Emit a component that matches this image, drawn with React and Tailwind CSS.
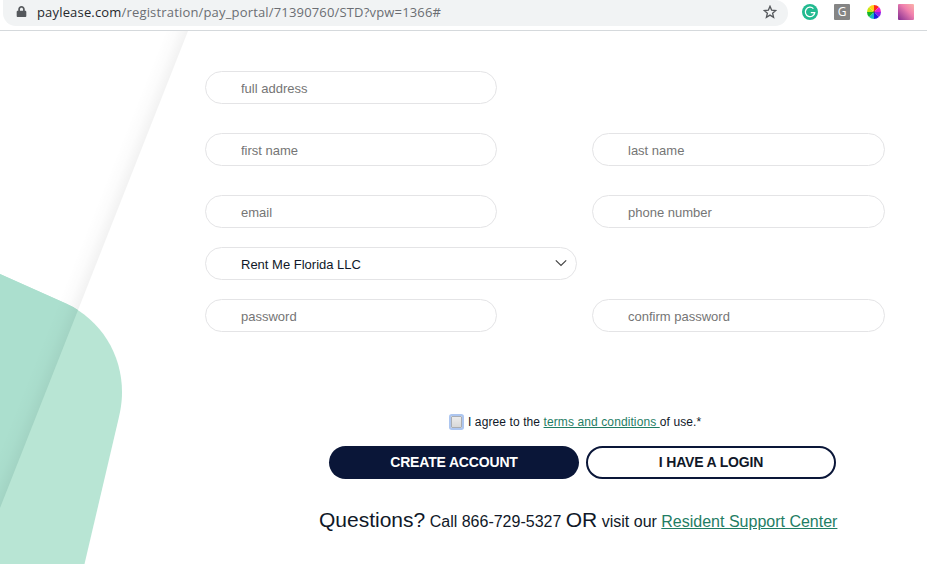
import { FaLock } from 'react-icons/fa';

const wheelColors = ['#ff2a1a', '#e81fd0', '#8a1fe8', '#1b1fe0', '#17b8c4', '#12b52a', '#c9e60f', '#ffd21a'];

function Field({ placeholder, type = 'text', className = '' }) {
  return (
    <input
      type={type}
      placeholder={placeholder}
      className={`block h-[33px] rounded-full border border-[#e4e4e6] bg-white pt-[2px] pr-4 pl-[35px] text-[13px] text-[#0a1638] outline-none placeholder:text-[#757575] ${className}`}
    />
  );
}

function ColorWheel() {
  return (
    <svg viewBox="-7 -7 14 14" className="size-[14px]">
      {wheelColors.map((color, index) => (
        <path key={color} d="M0 0V-7A7 7 0 0 1 4.95 -4.95Z" fill={color} transform={`rotate(${index * 45})`} />
      ))}
      <circle r="0.8" fill="#222" />
    </svg>
  );
}

function AddressBar() {
  return (
    <header className="flex h-[31px] shrink-0 items-start border-b border-[#d5d9dc] bg-white font-['Open_Sans','Noto_Sans',sans-serif]">
      <div className="ml-[3px] flex h-[26px] w-[785px] items-center rounded-r-full rounded-bl-full bg-[#f1f3f4] pr-[11px] pl-[13px]">
        <FaLock className="mb-[3px] size-[11px] text-[#55585c]" />
        <p className="mb-[2px] ml-[10px] text-[13px] leading-6 tracking-[0.17px] whitespace-nowrap text-[#6b6e73]">
          <span className="text-[#25282c]">paylease.com</span>/registration/pay_portal/71390760/STD?vpw=1366#
        </p>
        <svg viewBox="0 0 14 14" className="mb-[2px] ml-auto size-[14px]" fill="none" stroke="#55585c" strokeWidth="1.3">
          <path d="M7 1.3 8.6 5.1 12.8 5.5 9.6 8.2 10.6 12.3 7 10.1 3.4 12.3 4.4 8.2 1.2 5.5 5.4 5.1Z" />
        </svg>
      </div>
      <div className="ml-[14px] flex h-[24px] items-center gap-4">
        <svg viewBox="0 0 16 16" className="size-4" fill="none">
          <circle cx="8" cy="8" r="8" fill="#22ba90" />
          <path d="M11.4 4.6A4.7 4.7 0 1 0 12.7 8.600H8.8M12.7 8.600A4.7 4.7 0 0 1 11.6 11.100" stroke="white" strokeWidth="1.3" />
        </svg>
        <span className="flex size-4 items-center justify-center rounded-[1px] bg-[#858585] pb-px text-[12px] leading-none font-medium text-white">G</span>
        <span className="flex size-4 items-center justify-center">
          <ColorWheel />
        </span>
        <span className="size-4 rounded-[1px] bg-linear-to-tr from-[#852a91] via-[#f07fae] via-60% to-[#fbb3a8]" />
      </div>
    </header>
  );
}

function Backdrop() {
  return (
    <svg viewBox="0 31 927 533" className="absolute inset-0 size-full" aria-hidden="true">
      <defs>
        <linearGradient id="fold" gradientUnits="userSpaceOnUse" x1="168" y1="23.1" x2="188" y2="31">
          <stop offset="0" stopColor="#000" stopOpacity="0" />
          <stop offset="0.5" stopColor="#000" stopOpacity="0.014" />
          <stop offset="1" stopColor="#000" stopOpacity="0.05" />
        </linearGradient>
      </defs>
      <path d="M0 274 66 303.500C101 320 122 354 122 392C122 401 121 408 118.500 419L84.500 564H0Z" fill="#b8e5d4" />
      <path d="M0 274 66 303.500Q73 306.500 78 310L0 508Z" fill="#abdfce" />
      <path d="M0 31H188L0 508Z" fill="url(#fold)" />
    </svg>
  );
}

export default function App() {
  return (
    <div className="flex h-[564px] w-[927px] flex-col overflow-hidden bg-white font-['Liberation_Sans',Arial,sans-serif] text-[#101828]">
      <AddressBar />
      <main className="relative flex-1">
        <Backdrop />
        <form className="relative pt-10" onSubmit={(event) => event.preventDefault()}>
          <div className="ml-[205px] w-[680px]">
            <Field placeholder="full address" className="w-[292px]" />
            <div className="mt-[29px] flex justify-between">
              <Field placeholder="first name" className="w-[292px]" />
              <Field placeholder="last name" className="w-[293px]" />
            </div>
            <div className="mt-[29px] flex justify-between">
              <Field placeholder="email" type="email" className="w-[292px]" />
              <Field placeholder="phone number" type="tel" className="w-[293px]" />
            </div>
            <button
              type="button"
              className="mt-[19px] flex h-[33px] w-[372px] items-center justify-between rounded-full border border-[#e4e4e6] bg-white pr-[9px] pl-[35px] text-[13px]"
            >
              <span className="pt-[2px]">Rent Me Florida LLC</span>
              <svg viewBox="0 0 12 8" className="mb-px h-2 w-3" fill="none" stroke="#444" strokeWidth="1.2">
                <path d="M0.800 1.300 6 6.500 11.200 1.300" />
              </svg>
            </button>
            <div className="mt-[19px] flex justify-between">
              <Field placeholder="password" type="password" className="w-[292px]" />
              <Field placeholder="confirm password" type="password" className="w-[293px]" />
            </div>
          </div>

          <div className="mt-[81px] ml-[449px] flex h-[18px] items-center whitespace-nowrap">
            <input
              type="checkbox"
              className="mx-[2px] h-3 w-[11px] appearance-none rounded-[1px] border border-[#a9adb3] bg-linear-to-b from-[#ececec] to-[#d8d8d8] ring-2 ring-[#adc6f0]"
            />
            <p className="ml-1 text-[12px] tracking-[0.1px]">
              I agree to the <a href="#terms" className="text-[#1f7d64] underline">terms and conditions </a>of use.*
            </p>
          </div>

          <div className="mt-[15px] ml-[329px] flex gap-[7px] text-[14px] font-bold tracking-[-0.17px]">
            <button type="submit" className="h-[33px] w-[250px] rounded-full bg-[#0a1638] text-white">
              CREATE ACCOUNT
            </button>
            <button type="button" className="h-[33px] w-[250px] rounded-full border-2 border-[#0a1638] bg-white">
              I HAVE A LOGIN
            </button>
          </div>

          <p className="mt-[25px] ml-[319px] text-[16px] leading-8 whitespace-nowrap">
            <span className="text-[21px]">Questions?</span> Call 866-729-5327 <span className="text-[21px]">OR</span> visit our{' '}
            <a href="#support" className="text-[#1f7d64] underline">Resident Support Center</a>
          </p>
        </form>
      </main>
    </div>
  );
}
